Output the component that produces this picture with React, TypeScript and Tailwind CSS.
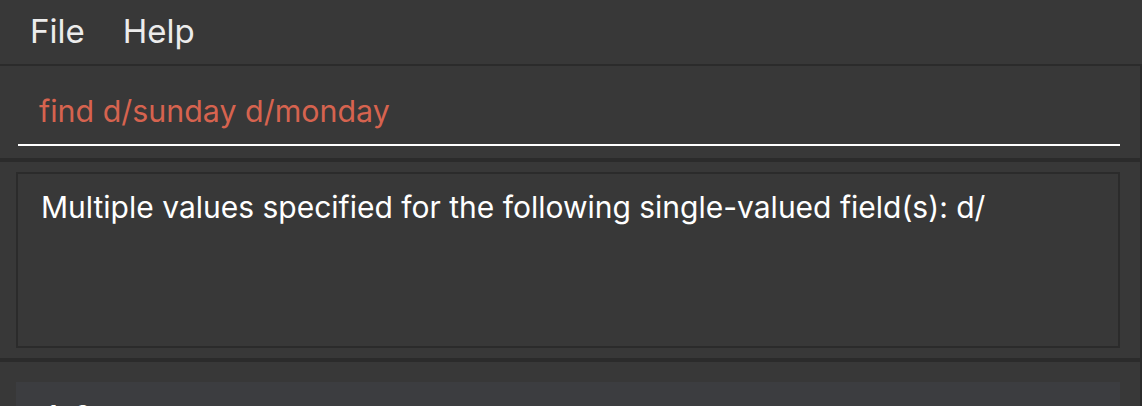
const font = "font-['Inter','Liberation_Sans',sans-serif]";

const App = () => {
  return (
    <div className={`h-[406px] w-full overflow-hidden bg-[#2b2b2b] ${font}`}>
      {/* menu bar */}
      <div className="flex h-[64px] items-center gap-[38px] bg-[#383838] pl-[30px] text-[33px] text-[#ececec]">
        <span>File</span>
        <span>Help</span>
      </div>

      <div className="mt-[2px] flex flex-col gap-[4px] pr-[2px]">
        {/* command box */}
        <div className="h-[92px] bg-[#383838] pr-[20px] pl-[18px] pt-[24px]">
          <div className="border-b-2 border-white pl-[21px] pb-[12px] text-[30.4px] leading-[42px] text-[#d6634f]">
            find d/sunday d/monday
          </div>
        </div>

        {/* result display */}
        <div className="h-[196px] bg-[#383838] pt-[10px] pr-[20px] pl-[16px]">
          <div className="h-[176px] border-2 border-[#2b2b2b] px-[23px] pt-[13px] text-[30px] leading-[40px] text-white">
            Multiple values specified for the following single-valued field(s): d/
          </div>
        </div>

        {/* list */}
        <div className="h-[60px] bg-[#383838] pt-[20px] pr-[20px] pl-[16px]">
          <div className="h-[60px] bg-[#3c3d40] pl-[30px] pt-[12px] text-[30px] text-white">1. ?</div>
        </div>
      </div>
    </div>
  );
};

export default App;
